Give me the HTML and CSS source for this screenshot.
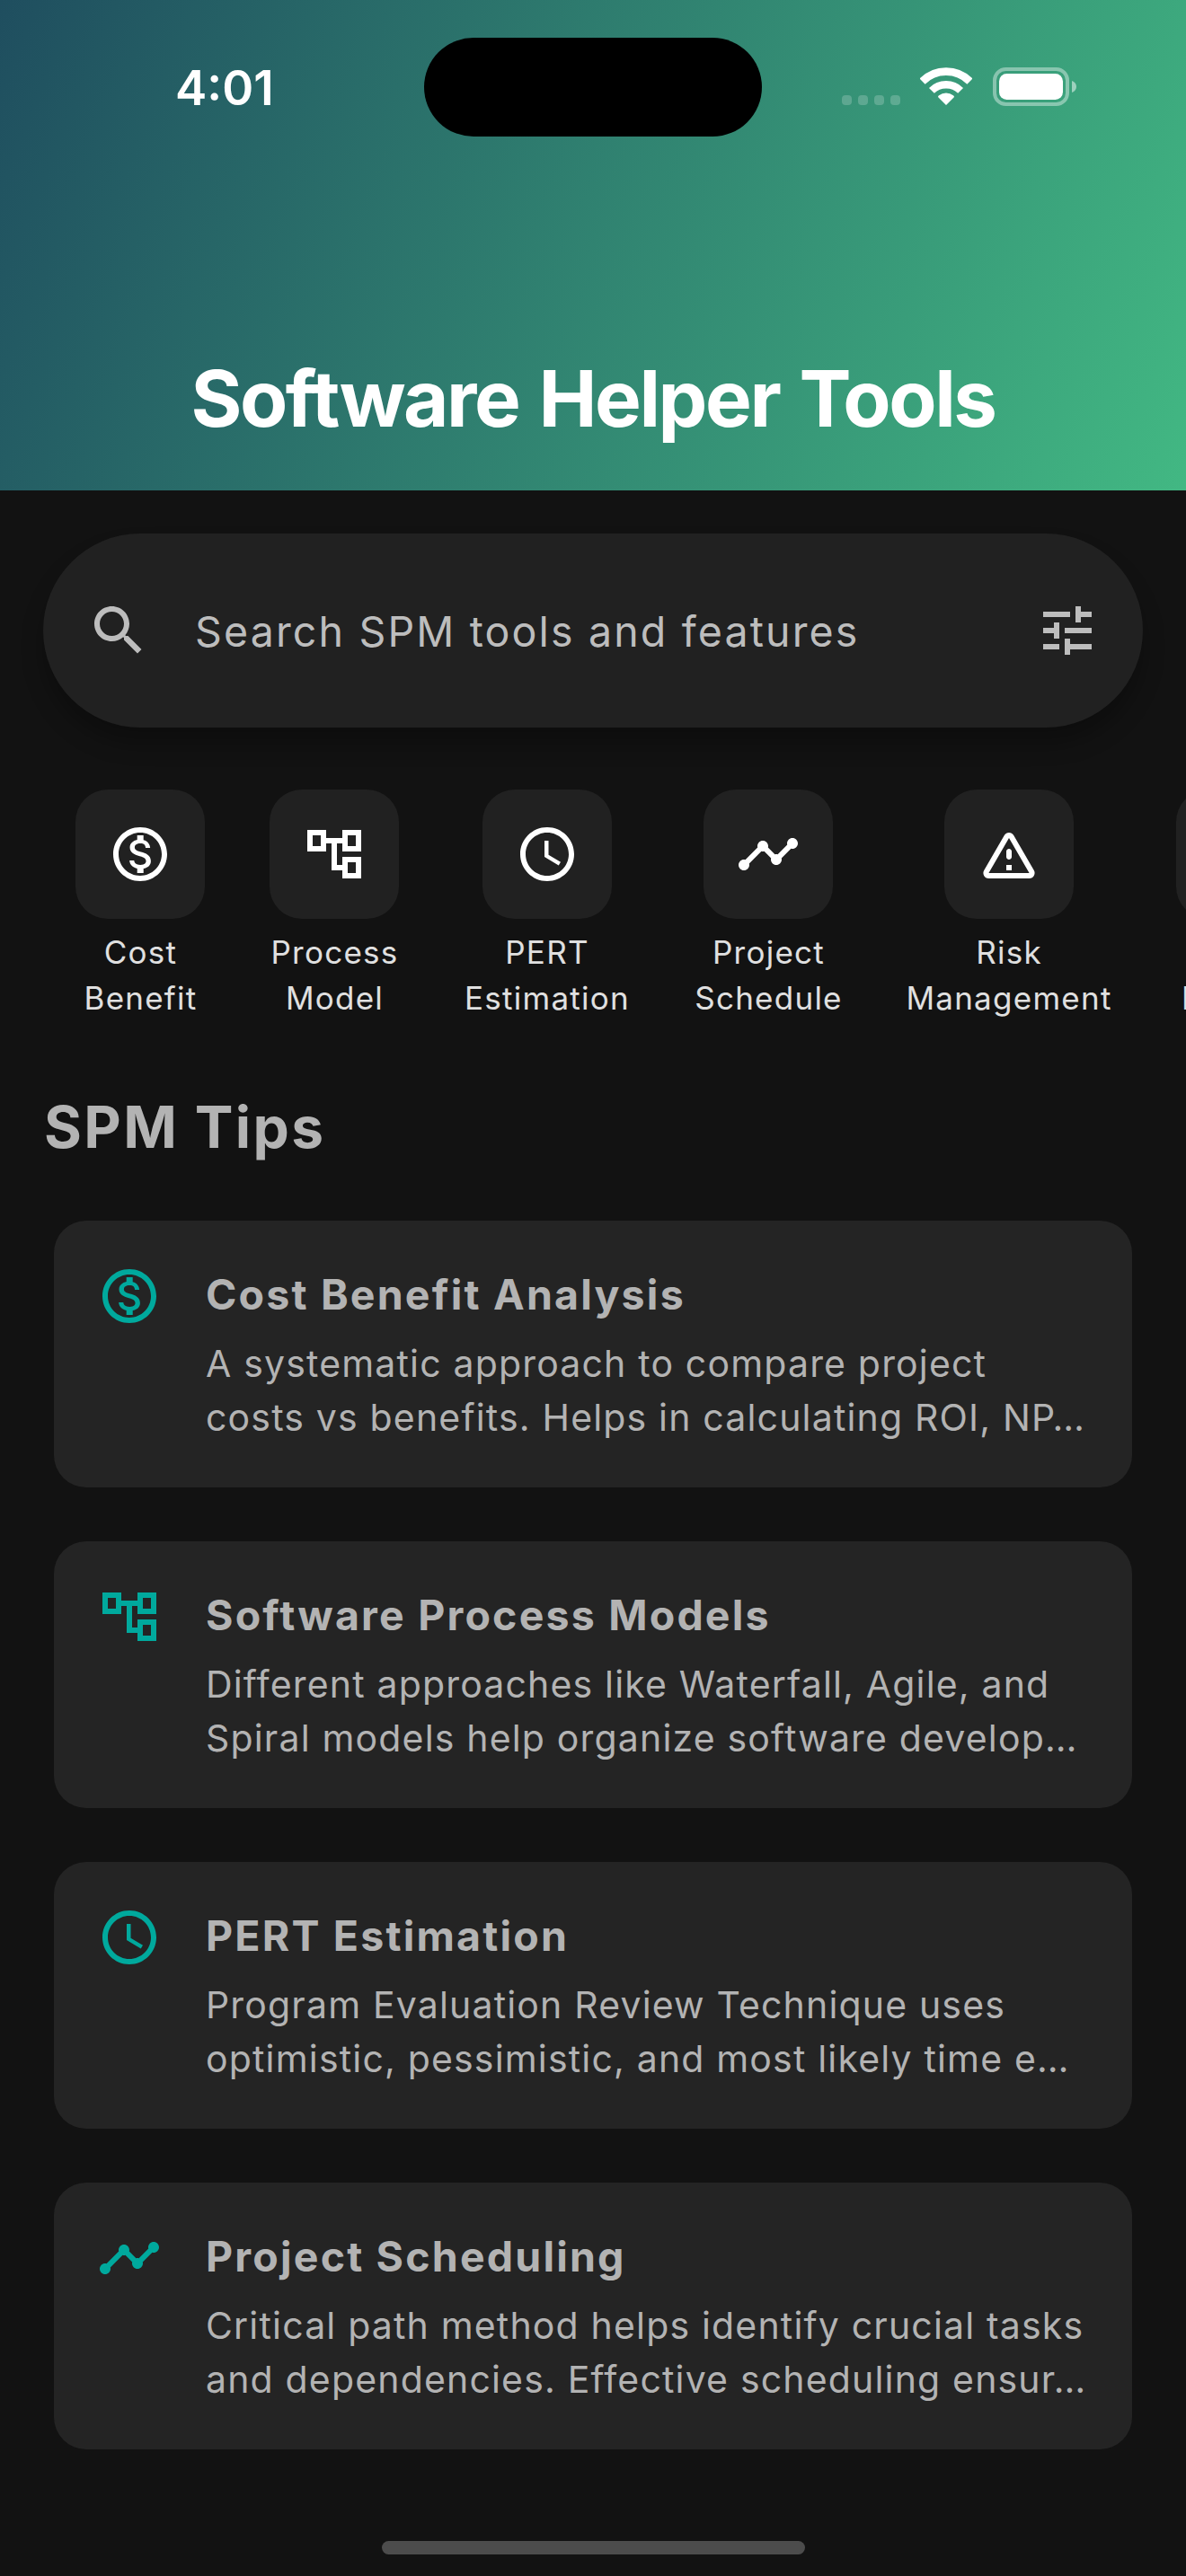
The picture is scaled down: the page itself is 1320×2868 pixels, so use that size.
FILE: index.html
```html
<!DOCTYPE html>
<html lang="en">
<head>
<meta charset="utf-8">
<title>Software Helper Tools</title>
<link rel="stylesheet" href="styles.css">
</head>
<body>
<svg class="sprite" aria-hidden="true">
  <symbol id="money" viewBox="0 0 24 24"><path d="M12 2C6.48 2 2 6.48 2 12s4.48 10 10 10 10-4.48 10-10S17.52 2 12 2zm0 18c-4.41 0-8-3.59-8-8s3.59-8 8-8 8 3.59 8 8-3.59 8-8 8zm.31-8.86c-1.77-.45-2.34-.94-2.34-1.67 0-.84.79-1.43 2.1-1.43 1.38 0 1.9.66 1.94 1.64h1.71c-.05-1.34-.87-2.57-2.49-2.97V5H10.9v1.69c-1.51.32-2.72 1.3-2.72 2.81 0 1.79 1.49 2.69 3.66 3.21 1.95.46 2.34 1.15 2.34 1.87 0 .53-.39 1.39-2.1 1.39-1.6 0-2.23-.72-2.32-1.64H8.04c.1 1.7 1.36 2.66 2.86 2.97V19h2.34v-1.67c1.52-.29 2.72-1.16 2.73-2.77-.01-2.2-1.9-2.96-3.66-3.42z"/></symbol>
  <symbol id="tree" viewBox="0 0 24 24"><path d="M22 11V3h-7v3H9V3H2v8h7V8h2v10h4v3h7v-8h-7v3h-2V8h2v3h7zM7 9H4V5h3v4zm10 6h3v4h-3v-4zm0-10h3v4h-3V5z"/></symbol>
  <symbol id="clock" viewBox="0 0 24 24"><path d="M11.99 2C6.47 2 2 6.48 2 12s4.47 10 9.99 10C17.52 22 22 17.52 22 12S17.52 2 11.99 2zM12 20c-4.42 0-8-3.58-8-8s3.58-8 8-8 8 3.58 8 8-3.58 8-8 8zm.5-13H11v6l5.25 3.15.75-1.23-4.5-2.67z"/></symbol>
  <symbol id="timeline" viewBox="0 0 24 24"><path d="M23 8c0 1.1-.9 2-2 2-.18 0-.35-.02-.51-.07l-3.56 3.55c.05.16.07.34.07.52 0 1.1-.9 2-2 2s-2-.9-2-2c0-.18.02-.36.07-.52l-2.55-2.55c-.16.05-.34.07-.52.07s-.36-.02-.52-.07l-4.55 4.56c.05.16.07.33.07.51 0 1.1-.9 2-2 2s-2-.9-2-2 .9-2 2-2c.18 0 .35.02.51.07l4.56-4.55C8.02 9.36 8 9.18 8 9c0-1.1.9-2 2-2s2 .9 2 2c0 .18-.02.36-.07.52l2.55 2.55c.16-.05.34-.07.52-.07s.36.02.52.07l3.55-3.56C19.02 8.35 19 8.18 19 8c0-1.1.9-2 2-2s2 .9 2 2z"/></symbol>
  <symbol id="warning" viewBox="0 0 24 24"><path d="M12 5.99L19.53 19H4.47L12 5.99M2.74 18c-.77 1.33.19 3 1.73 3h15.06c1.54 0 2.5-1.67 1.73-3L13.73 4.99c-.77-1.33-2.69-1.33-3.46 0L2.74 18zM11 11v2c0 .55.45 1 1 1s1-.45 1-1v-2c0-.55-.45-1-1-1s-1 .45-1 1zm0 5h2v2h-2z"/></symbol>
  <symbol id="search" viewBox="0 0 24 24"><path d="M15.5 14h-.79l-.28-.27C15.41 12.59 16 11.11 16 9.5 16 5.91 13.09 3 9.5 3S3 5.91 3 9.5 5.91 16 9.5 16c1.61 0 3.09-.59 4.23-1.57l.27.28v.79l5 4.99L20.49 19l-4.99-5zm-6 0C7.01 14 5 11.99 5 9.5S7.01 5 9.5 5 14 7.01 14 9.5 11.99 14 9.5 14z"/></symbol>
  <symbol id="tune" viewBox="0 0 24 24"><path d="M3 17v2h6v-2H3zM3 5v2h10V5H3zm10 16v-2h8v-2h-8v-2h-2v6h2zM7 9v2H3v2h4v2h2V9H7zm14 4v-2H11v2h10zm-6-4h2V7h4V5h-4V3h-2v6z"/></symbol>
</svg>

<div class="screen">
  <header class="header">
    <div class="status">
      <span class="time">4:01</span>
      <div class="indicators">
        <div class="signal"><i></i><i></i><i></i><i></i></div>
        <svg class="wifi" viewBox="0 0 58 42">
          <path d="M2.6 15.6a37.3 37.3 0 0 1 52.8 0" fill="none" stroke="#fff" stroke-width="8.6"/>
          <path d="M12.9 25.9a22.8 22.8 0 0 1 32.2 0" fill="none" stroke="#fff" stroke-width="8.3"/>
          <path d="M29 42l-9-9q0-1.200 1-1.800a13.300 13.300 0 0 1 16 0q1 .6 1 1.800z" fill="#fff"/>
        </svg>
        <svg class="battery" viewBox="0 0 94 43">
          <rect x="2" y="2" width="81" height="39" rx="12.5" fill="none" stroke="#fff" stroke-opacity=".4" stroke-width="4"/>
          <rect x="7" y="7" width="71" height="29" rx="8.5" fill="#fff"/>
          <path d="M88 15c3 1 5 3.500 5 6.500s-2 5.500-5 6.500z" fill="#fff" fill-opacity=".5"/>
        </svg>
      </div>
    </div>
    <div class="island"></div>
    <h1>Software Helper Tools</h1>
  </header>

  <div class="search">
    <svg class="icon"><use href="#search"/></svg>
    <span class="placeholder">Search SPM tools and features</span>
    <svg class="icon"><use href="#tune"/></svg>
  </div>

  <nav class="tools">
    <a class="tool"><span class="chip"><svg class="icon"><use href="#money"/></svg></span><span class="label">Cost<br>Benefit</span></a>
    <a class="tool"><span class="chip"><svg class="icon"><use href="#tree"/></svg></span><span class="label">Process<br>Model</span></a>
    <a class="tool estimation"><span class="chip"><svg class="icon"><use href="#clock"/></svg></span><span class="label">PERT<br>Estimation</span></a>
    <a class="tool schedule"><span class="chip"><svg class="icon"><use href="#timeline"/></svg></span><span class="label">Project<br>Schedule</span></a>
    <a class="tool risk"><span class="chip"><svg class="icon"><use href="#warning"/></svg></span><span class="label">Risk<br>Management</span></a>
    <a class="tool last"><span class="chip"></span><span class="label">Code<br>Metrics</span></a>
  </nav>

  <h2>SPM Tips</h2>

  <main class="tips">
    <article class="card">
      <svg class="icon"><use href="#money"/></svg>
      <div class="body"><h3>Cost Benefit Analysis</h3><p>A systematic approach to compare project<br>costs vs benefits. Helps in calculating ROI, NP…</p></div>
    </article>
    <article class="card">
      <svg class="icon"><use href="#tree"/></svg>
      <div class="body"><h3>Software Process Models</h3><p>Different approaches like Waterfall, Agile, and<br>Spiral models help organize software develop…</p></div>
    </article>
    <article class="card">
      <svg class="icon"><use href="#clock"/></svg>
      <div class="body"><h3>PERT Estimation</h3><p>Program Evaluation Review Technique uses<br>optimistic, pessimistic, and most likely time e…</p></div>
    </article>
    <article class="card">
      <svg class="icon"><use href="#timeline"/></svg>
      <div class="body"><h3>Project Scheduling</h3><p>Critical path method helps identify crucial tasks<br>and dependencies. Effective scheduling ensur…</p></div>
    </article>
  </main>
  <div class="home-indicator"></div>
</div>
</body>
</html>
```
FILE: styles.css
```css
* { box-sizing: border-box; }
body { margin: 0; background: #121212; font-family: Inter, "Liberation Sans", sans-serif; }
h1, h2, h3, p { margin: 0; }
.sprite { position: absolute; width: 0; height: 0; }
.screen { position: relative; width: 1320px; height: 2868px; overflow: hidden; background: #121212; }
.icon { display: block; flex: none; width: 72px; height: 72px; fill: currentColor; }

.header {
  position: relative;
  display: flex;
  flex-direction: column;
  justify-content: space-between;
  height: 546px;
  padding-bottom: 48px;
  color: #fff;
  background: linear-gradient(112.47deg, #1f4e5f, #42b883);
}
.status { display: flex; justify-content: space-between; align-items: flex-start; padding: 66px 121px 0 195px; }
.time { font-size: 53px; font-weight: 600; line-height: 64px; }
.indicators { display: flex; align-items: flex-end; height: 52px; }
.signal { display: flex; gap: 7px; margin-right: 22px; padding-bottom: 1px; }
.signal i { width: 11px; height: 11px; border-radius: 4px; background: rgba(255, 255, 255, .2); }
.wifi { width: 58px; height: 42px; margin: 0 23px 1px 0; }
.battery { width: 94px; height: 43px; }
.island { position: absolute; left: 472px; top: 42px; width: 376px; height: 110px; border-radius: 55px; background: #000; }
h1 { text-align: center; font-size: 87px; font-weight: 700; line-height: 108px; letter-spacing: -2.44px; word-spacing: 4px; }

.search {
  display: flex;
  align-items: center;
  height: 216px;
  margin: 48px 48px 0;
  padding: 0 48px;
  border-radius: 108px;
  color: #bdbdbd;
  background: #212121;
  box-shadow: 0 18px 24px rgba(0, 0, 0, .26);
}
.placeholder { flex: 1; padding: 1px 0 0 49px; font-size: 46.5px; line-height: 60px; letter-spacing: 2.15px; }

.tools { display: flex; gap: 72px; margin-top: 69px; padding-left: 84px; }
.tool { display: flex; flex-direction: column; flex: none; align-items: center; gap: 12px; width: 144px; color: #fff; }
.estimation { width: 185px; }
.schedule { width: 164px; }
.risk { width: 227px; }
.last { width: 146px; }
.chip { display: grid; place-items: center; width: 144px; height: 144px; border-radius: 36px; background: #212121; }
.label { padding-left: 1px; color: #e0e0e0; text-align: center; white-space: nowrap; font-size: 35px; line-height: 51.4px; letter-spacing: 1.25px; }

h2 { margin: 78px 0 65px 49px; color: #b3b3b3; font-size: 64px; font-weight: 700; line-height: 78px; letter-spacing: 2.4px; }

.tips { display: flex; flex-direction: column; gap: 60px; padding: 0 60px; }
.card { display: flex; gap: 49px; height: 297px; padding: 48px; border-radius: 36px; color: #00a99d; background: #242424; }
.body { padding-top: 4px; color: #b3b3b3; white-space: nowrap; }
h3 { margin-bottom: 17px; font-size: 46.5px; font-weight: 700; line-height: 60px; letter-spacing: 2.18px; }
p { font-size: 41px; line-height: 60px; letter-spacing: 1.17px; }

.home-indicator { position: absolute; left: 425px; top: 2829px; width: 471px; height: 15px; border-radius: 8px; background: #4c4c4c; }
```
